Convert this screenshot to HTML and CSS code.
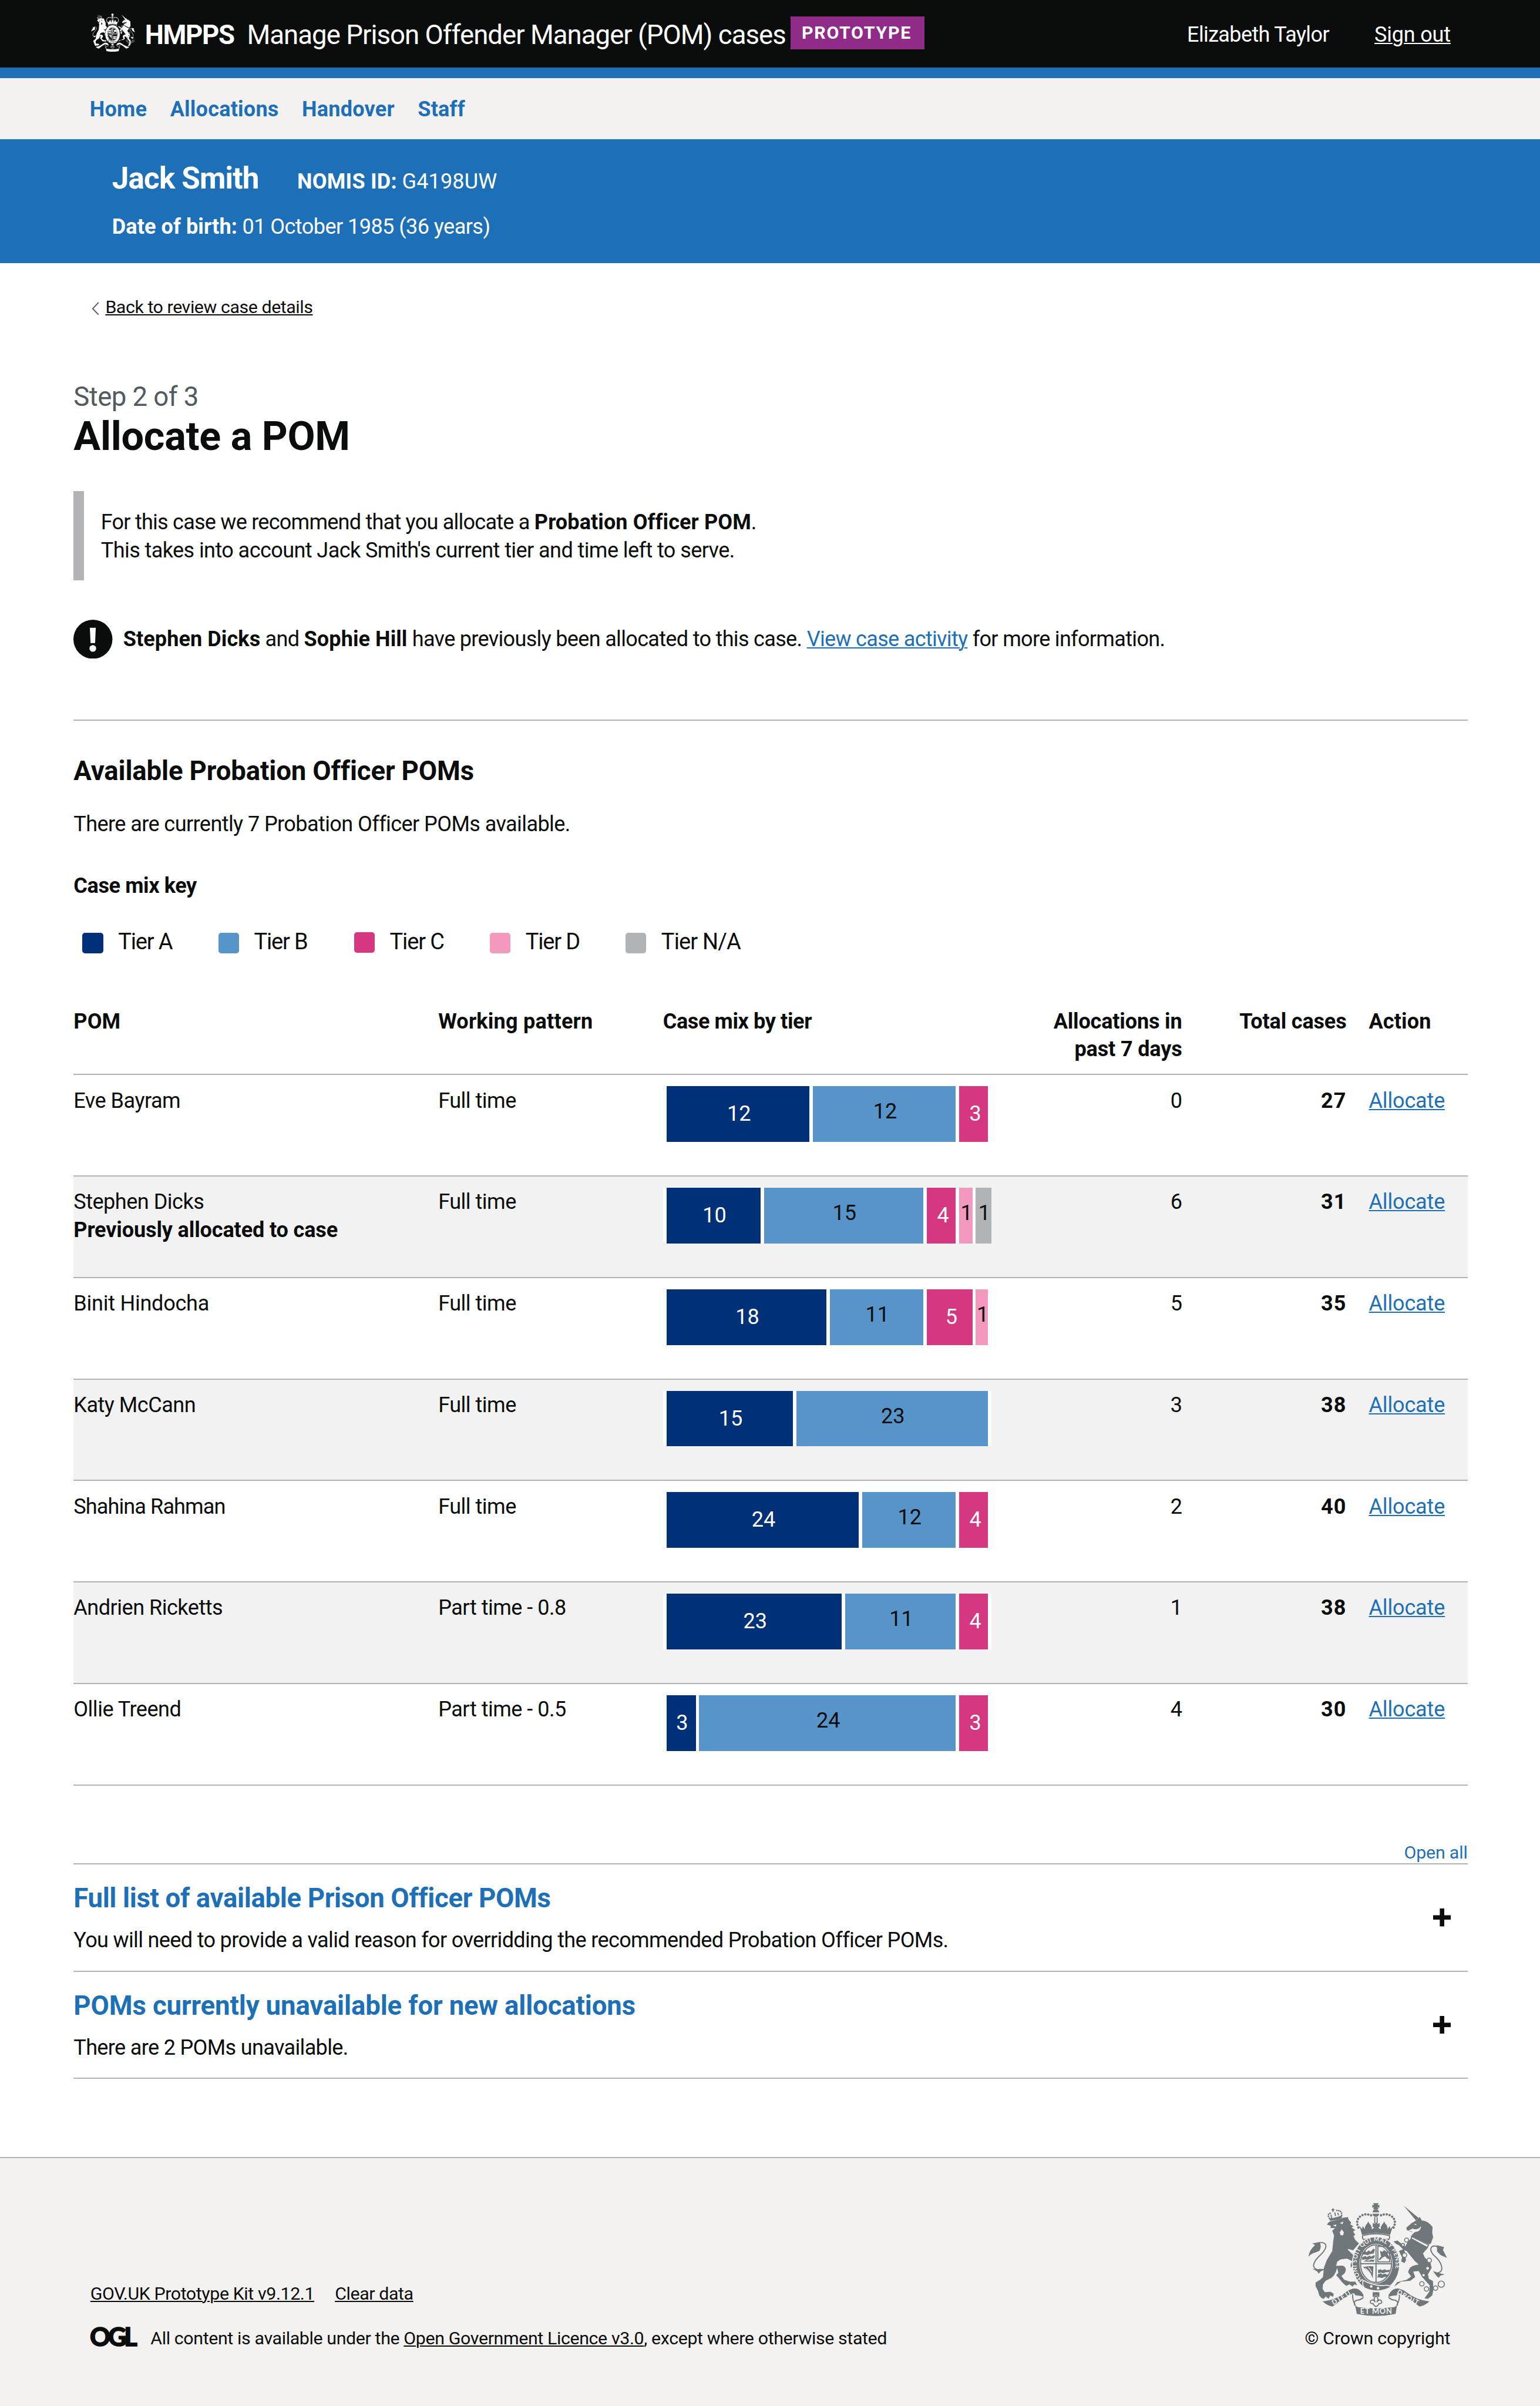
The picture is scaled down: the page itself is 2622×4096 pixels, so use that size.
FILE: index.html
```
<!DOCTYPE html>
<html lang="en">
<head>
<meta charset="utf-8">
<title>Allocate a POM</title>
<link rel="stylesheet" href="styles.css">
</head>
<body>
<svg class="defs" aria-hidden="true">
  <symbol id="crest" viewBox="106 88 754 616" preserveAspectRatio="none">
    <!-- centre crown -->
    <g class="ink">
      <path d="M458 90h30l-6 12 10-4v18l-10-4 6 12h-30l6-12-10 4v-18l10 4z"/>
      <path d="M455 140q3-16 18-16t18 16zM455 148h36q-2 16-18 16t-18-16z"/>
      <path d="M398 262 384 212l14 18 4-16 12 18q-2-14 4-18l4 8q-10-12 2-18l8-14 8 14q12 6 2 18l4-8q8 8 4 18l14-8-8-6v-20l14 6-2-8h14l-2 8 14-6v20l-8 6 14 8q-2-14 4-18l4 8q-10-12 2-18l8-14 8 14q12 6 2 18l4-8q6 6 4 18l12-18 4 16 14-18-16 50q-74-20-150 0z"/>
      <path d="M464 166h6v34h-6zM477 166h6v34h-6z"/>
    </g>
    <g class="dots">
      <path d="M379 222q-18-38 10-60 30-22 66-2"/>
      <path d="M569 222q18-38-10-60-30-22-66-2"/>
    </g>
    <path class="line" d="M402 266q72-20 144 0 4 12-4 22-68-18-136 0-8-10-4-22z"/>
    <!-- lion -->
    <g class="ink">
      <path d="m208 206 14-16 28-6 50-16 22-2 4 14 14 15-5 10 17 10-10 7 20 14-12 8 12 18-10 6 10 22 20 18-32 38-28-8 48 46 14 26-4 40-13-20-15 15-5-15-10 10v-20l10-15-30-15-35 5-18 13-6 22 34-2q30 12 12 42l-17 15 15 20 30 10 30 0 10 20-15-5-10 12-15-12-20 8-20-18-20-25-14-15 12-12-6-28q-12 42-32 55l-30 15-15 20-2 25 12 17 30-2 18 10-3 18-15-8-10 18-15-13-10 13-12-3-13-15-7-25-13-25v-20l25-15 15-15 5-50 15-40 30-50 5-50 5-35-10-25 15-15-25 0 3-11z"/>
      <path d="m168 300-38 8 14 10q-30 24-36 62 20-20 42-24l18-8q14-26 0-48z"/>
      <path d="m128 444 22 6 20-4 30 2-26 12-10 12-8-12z"/>
      <path d="m226 186-6-14q34-2 68-16l2 14q-30 14-64 16z"/>
    </g>
    <path class="line" d="M188 450q-50 8-52-24 4-24 32-50 40-38 34-60-8-16-34-12"/>
    <g class="dots small"><path d="M222 172q-18-24 14-30M288 156q4-30-36-26"/></g>
    <path class="line" d="M241 118v20m-8-12h16m-18 26 2 18m34-28 4 14m-20-16 4 20"/>
    <path class="gap" d="m240 210 20-4-4 12zm38-12 20-8-6 14zM288 232l12 16-4 16h-14l-4-16z"/>
    <path class="cut" d="m322 340 36 36"/>
    <!-- unicorn -->
    <g class="ink">
      <path d="m624 104 80 66-14 14z"/>
      <path d="m690 184 20-20 12 20q32 0 58 36l-2 30 5 25-13 35-12 2-90-42v-8l22-22-10-5-12 12-27-10-3-14 27-24z"/>
      <path d="m664 280 92 50-28 32 10 23 30 27 7 28-20 35 5 25 22 12 2 48-6 30-23 18-19-2 26-36 2-35-39-43-20-34-30 2 11 30-26 20-50 5-38 27 16-24 52-13 24-17-16-23q4-35 42-40l15-3-20-17-45-55-12-5 8 55-8 15-18-10 5-20-17-35 22-10-22-22-13-6-17-14 22-6 20 16 22 17 13-25z"/>
      <path d="m804 318 38 10-6 16 22 42-34-14-20-20z"/>
      <path d="m782 458 30 10 34 8-22 6-12 12-14-14z"/>
    </g>
    <path class="line" d="M796 470q42-4 32-40-8-30-42-58-24-28-12-44 18-14 40 4"/>
    <path class="gap" d="m676 206 14-4 4 6zM648 240l24-12q28 12 46-14-2 34-36 32z"/>
    <path class="line" d="m666 270 92 46-10 18-84-50z"/>
    <g class="gap ring"><circle cx="639" cy="290" r="11"/><circle cx="620" cy="316" r="8"/><circle cx="628" cy="372" r="12"/><circle cx="762" cy="400" r="12"/><circle cx="753" cy="443" r="10"/><circle cx="731" cy="480" r="9"/><circle cx="722" cy="527" r="12"/><circle cx="747" cy="555" r="12"/><circle cx="796" cy="550" r="12"/><circle cx="827" cy="529" r="17"/></g>
    <!-- garter and shield -->
    <ellipse class="ink edge" cx="474" cy="420" rx="128" ry="148"/>
    <ellipse class="gap" cx="474" cy="418" rx="90" ry="108"/>
    <ellipse class="line" cx="474" cy="418" rx="84" ry="102"/>
    <path class="line" d="M474 316v204M390 418h168"/>
    <g class="ink">
      <path d="m400 356 16-8 6 8 14-10 8 8 16-18 8 6-6 20-22 4-12 6-14-4-14 2zM398 384l18-8 8 6 14-8 10 6 14-8 6 4-8 14-18 2-12 6-14-4-16 4zM406 406l14-8 14 4 14-6 18 2-4 10z"/>
      <path d="m484 452 16-4 6 6 14-6 12 6 18-4-6 14-18 0-12 6-14-4-14 4zM484 476l16-6 8 6 14-4 12 6 8-4-6 14-18 2-12 6-12-4-12 2z"/>
      <path d="m496 348 12 6 10-10 14 10 12-4-8 14 8 14 4 16-14-4-10-12-14 6-16 16-6-6 14-16-4-14z"/>
      <path d="M404 436q32-6 56-4l-4 66q-6-24-24-38-14-12-28-24z"/>
    </g>
    <path class="cut" d="M416 442q20 16 30 34m-14-38q12 10 18 26"/>
    <path class="line" d="M484 324h64v84h-64z"/>
    <path class="ink edge" d="M404 508q66 36 130 26l24 8q-70 44-148 6-12-18-6-40z"/>
    <g class="gap"><circle cx="448" cy="541" r="7"/><circle cx="485" cy="551" r="7"/></g>
    <!-- ribbon -->
    <g class="ink">
      <path d="M185 622q72-6 128-52 50-34 80-2 14 14 14 30-22-10-44-8-8-14-12-12-50 22-112 72-30-6-54-28z"/>
      <path d="M763 622q-72-6-128-52-50-34-80-2-14 14-14 30 22-10 44-8 8-14 12-12 50 22 112 72 30-6 54-28z"/>
      <path d="M360 640q10 16 28 14 86 12 172 0 18 2 28-14l-8 50q-106 22-210 0z"/>
      <path d="M456 572h36v26h-8q-2-10-10-12-8 2-10 12h-8z"/>
    </g>
    <path class="line" d="M406 600q-14 14-36 16-20 6-10 30M348 584q-4 26 14 60M542 600q14 14 36 16 20 6 10 30M600 584q4 26-14 60M474 590q-18 18-4 36-14-20-26-6-4 16 14 14 6 14 16 16 10-2 16-16 18 2 14-14-12-14-26 6 14-18-4-36z"/>
  </symbol>
</svg>

<header class="header">
  <svg class="header-crest"><use href="#crest"/></svg>
  <span class="org">HMPPS</span>
  <span class="service">Manage Prison Offender Manager (POM) cases</span>
  <strong class="tag">PROTOTYPE</strong>
  <span class="user">Elizabeth Taylor</span>
  <a class="signout" href="#">Sign out</a>
</header>
<nav class="nav">
  <a class="home" href="#">Home</a><a href="#">Allocations</a><a href="#">Handover</a><a href="#">Staff</a>
</nav>
<section class="banner">
  <div class="banner-row">
    <h2 class="person">Jack Smith</h2>
    <div class="pair"><b>NOMIS ID:</b><span class="id">G4198UW</span></div>
  </div>
  <div class="pair dob"><b>Date of birth:</b><span>01 October 1985 (36 years)</span></div>
</section>

<main class="main">
  <div class="back">
    <svg class="chevron" viewBox="0 0 14 24"><path d="M12.5 1 2 12l10.5 11"/></svg>
    <a href="#">Back to review case details</a>
  </div>
  <div class="step">Step 2 of 3</div>
  <h1 class="title">Allocate a POM</h1>
  <div class="inset">
    <div class="inset-1">For this case we recommend that you allocate a <b>Probation Officer POM</b>.</div>
    <div class="inset-2">This takes into account Jack Smith's current tier and time left to serve.</div>
  </div>
  <div class="warning">
    <svg class="warning-icon" viewBox="0 0 70 70"><circle cx="35" cy="35" r="35"/><path d="M29.5 14.5h10.6l-1.2 27.5h-8.2z"/><circle class="dot" cx="34.8" cy="51.5" r="6"/></svg>
    <div class="warning-text"><b>Stephen Dicks</b> and <b>Sophie Hill</b> have previously been allocated to this case. <a class="link" href="#">View case activity</a> for more information.</div>
  </div>
  <hr class="rule">
  <h2 class="heading">Available Probation Officer POMs</h2>
  <p class="intro">There are currently 7 Probation Officer POMs available.</p>
  <h3 class="key-title">Case mix key</h3>
  <ul class="key">
    <li><i class="a"></i>Tier A</li><li><i class="b"></i>Tier B</li><li><i class="c"></i>Tier C</li><li><i class="d"></i>Tier D</li><li class="last"><i class="n"></i>Tier N/A</li>
  </ul>

  <div class="table" role="table">
    <div class="row head" role="row"><div>POM</div><div class="pattern">Working pattern</div><div class="mix-head">Case mix by tier</div><div class="num">Allocations in<br>past 7 days</div><div class="num">Total cases</div><div class="act">Action</div></div>
    <div class="row" role="row"><div>Eve Bayram</div><div>Full time</div><div class="bars"><span class="a" style="width:25.6rem">12</span><span class="b" style="width:25.6rem">12</span><span class="c" style="width:5.2rem">3</span></div><div class="num">0</div><div class="num total">27</div><div class="act"><a class="link" href="#">Allocate</a></div></div>
    <div class="row shade" role="row"><div>Stephen Dicks<br><b class="previous">Previously allocated to case</b></div><div>Full time</div><div class="bars"><span class="a" style="width:16.8rem">10</span><span class="b" style="width:28.6rem">15</span><span class="c" style="width:5.2rem">4</span><span class="d" style="width:2.4rem">1</span><span class="n" style="width:2.8rem">1</span></div><div class="num">6</div><div class="num total">31</div><div class="act"><a class="link" href="#">Allocate</a></div></div>
    <div class="row" role="row"><div class="loose">Binit Hindocha</div><div>Full time</div><div class="bars"><span class="a" style="width:28.6rem">18</span><span class="b" style="width:16.8rem">11</span><span class="c" style="width:8.2rem">5</span><span class="d" style="width:2.2rem">1</span></div><div class="num">5</div><div class="num total">35</div><div class="act"><a class="link" href="#">Allocate</a></div></div>
    <div class="row shade" role="row"><div>Katy McCann</div><div>Full time</div><div class="bars"><span class="a" style="width:22.6rem">15</span><span class="b" style="width:34.4rem">23</span></div><div class="num">3</div><div class="num total">38</div><div class="act"><a class="link" href="#">Allocate</a></div></div>
    <div class="row" role="row"><div class="tight">Shahina Rahman</div><div>Full time</div><div class="bars"><span class="a" style="width:34.4rem">24</span><span class="b" style="width:16.8rem">12</span><span class="c" style="width:5.2rem">4</span></div><div class="num">2</div><div class="num total">40</div><div class="act"><a class="link" href="#">Allocate</a></div></div>
    <div class="row shade" role="row"><div>Andrien Ricketts</div><div>Part time - 0.8</div><div class="bars"><span class="a" style="width:31.4rem">23</span><span class="b" style="width:19.8rem">11</span><span class="c" style="width:5.2rem">4</span></div><div class="num">1</div><div class="num total">38</div><div class="act"><a class="link" href="#">Allocate</a></div></div>
    <div class="row" role="row"><div>Ollie Treend</div><div>Part time - 0.5</div><div class="bars"><span class="a" style="width:5.2rem">3</span><span class="b" style="width:46rem">24</span><span class="c" style="width:5.2rem">3</span></div><div class="num">4</div><div class="num total">30</div><div class="act"><a class="link" href="#">Allocate</a></div></div>
  </div>

  <div class="open-all">Open all</div>
  <section class="fold">
    <div><h2>Full list of available Prison Officer POMs</h2><p>You will need to provide a valid reason for overridding the recommended Probation Officer POMs.</p></div>
    <svg class="plus" viewBox="0 0 32 32"><path d="M12 0h8v12h12v8H20v12h-8V20H0v-8h12z"/></svg>
  </section>
  <section class="fold last">
    <div><h2>POMs currently unavailable for new allocations</h2><p>There are 2 POMs unavailable.</p></div>
    <svg class="plus" viewBox="0 0 32 32"><path d="M12 0h8v12h12v8H20v12h-8V20H0v-8h12z"/></svg>
  </section>
</main>

<footer class="footer">
  <div class="footer-left">
    <div class="footer-links"><a href="#">GOV.UK Prototype Kit v9.12.1</a><a href="#">Clear data</a></div>
    <div class="licence">
      <svg class="ogl" viewBox="0 0 82 34"><text x="-1" y="33" textLength="84" lengthAdjust="spacing">OGL</text></svg>
      <div>All content is available under the <a href="#">Open Government Licence v3.0</a>, except where otherwise stated</div>
    </div>
  </div>
  <div class="footer-right">
    <svg class="footer-crest" viewBox="106 88 754 616" preserveAspectRatio="none">
      <use href="#crest" x="106" y="88" width="754" height="616"/>
      <path id="garter-path" fill="none" d="M408 506C382 490 369 460 369 420 369 350 416 296 474 296s106 54 106 124c0 48-22 86-56 112"/>
      <path id="dieu-path" fill="none" d="M244 642q50-28 104-62"/>
      <path id="droit-path" fill="none" d="M584 578q60 38 122 68"/>
      <text class="motto"><textPath href="#garter-path" startOffset="4" textLength="480">HONI SOIT QUI MAL Y PENSE</textPath></text>
      <text class="motto scroll"><textPath href="#dieu-path" textLength="112">DIEU</textPath></text>
      <text class="motto scroll"><textPath href="#droit-path" textLength="130">DROIT</textPath></text>
      <text class="motto wide" x="388" y="690" textLength="172">ET MON</text>
    </svg>
    <div class="copyright">© Crown copyright</div>
  </div>
</footer>
</body>
</html>
```
FILE: styles.css
```
/* 1rem = 5 CSS points of the original 1381pt-wide layout */
html { font-size: 9.4931px; }
* { box-sizing: border-box; }
body {
  margin: 0;
  height: 4096px;
  display: flex;
  flex-direction: column;
  background: #fff;
  color: #0b0c0c;
  font-family: Roboto, "Liberation Sans", sans-serif;
  font-size: 3.8rem;
  line-height: 5rem;
  letter-spacing: -0.0165em;
  white-space: nowrap;
}
h1, h2, h3, p, ul { margin: 0; padding: 0; }
b, h1, h2, h3, .head, .total { font-weight: 700; letter-spacing: 0.002em; }
svg { display: block; }
.defs { position: absolute; width: 0; height: 0; }
a {
  color: inherit;
  text-decoration: underline;
  text-decoration-thickness: 2px;
  text-underline-offset: 0.2rem;
}
.link { color: #1d70b8; }

/* crest */
.ink { fill: var(--crest); }
.gap { fill: var(--crest-gap); }
.edge { stroke: var(--crest-gap); stroke-width: 5; }
.cut { fill: none; stroke: var(--crest-gap); stroke-width: 4; }
.line { fill: none; stroke: var(--crest); stroke-width: 6; }
.ring { stroke: var(--crest); stroke-width: 5; }
.dots { fill: none; stroke: var(--crest); stroke-width: 13; stroke-linecap: round; stroke-dasharray: 0 16; }
.dots.small { stroke-width: 9; stroke-dasharray: 0 11; }
.motto { fill: var(--crest-gap); font: 700 32px Lato, sans-serif; letter-spacing: 0; }
.scroll { font-size: 36px; }
.wide { font-size: 41px; }

/* header */
.header {
  --crest: #fff;
  --crest-gap: #0b0c0c;
  height: 14rem;
  padding-left: 16.3rem;
  display: grid;
  grid-template-columns: 9.7rem 18.3rem 97.5rem 71.1rem 33.6rem auto;
  align-items: start;
  background: #0b0c0c;
  border-bottom: 2rem solid #1d70b8;
  color: #fff;
}
.header-crest { width: 7.9rem; height: 6.9rem; margin-top: 2.4rem; }
.org { margin-top: 3.35rem; font-size: 4.8rem; line-height: 6rem; font-weight: 700; letter-spacing: -0.03em; }
.service { margin-top: 3.35rem; font-size: 4.8rem; line-height: 6rem; letter-spacing: -0.0215em; }
.tag {
  justify-self: start;
  width: 24rem;
  margin-top: 3rem;
  padding-left: 2rem;
  background: #912b88;
  font-size: 3.2rem;
  line-height: 5.8rem;
  letter-spacing: 0.055em;
}
.user { margin-top: 3.75rem; letter-spacing: -0.018em; }
.signout { margin-top: 3.75rem; letter-spacing: -0.006em; justify-self: start; }

/* navigation */
.nav {
  height: 11rem;
  padding: 3.15rem 0 0 16.1rem;
  display: flex;
  gap: 4.15rem;
  background: #f3f2f1;
}
.nav a { color: #1d70b8; font-weight: 700; text-decoration: none; letter-spacing: 0.006em; }

/* person banner */
.banner { height: 22.2rem; padding: 4.1rem 0 0 20.1rem; background: #1d70b8; color: #fff; }
.banner-row { display: flex; align-items: baseline; height: 6rem; }
.person { width: 33.2rem; font-size: 5.4rem; line-height: 6rem; letter-spacing: -0.017em; }
.pair { display: flex; gap: 0.9rem; }
.pair b { letter-spacing: 0.007em; }
.pair .id { letter-spacing: 0.003em; }
.dob { margin-top: 3.15rem; letter-spacing: -0.0155em; }
.dob b { letter-spacing: 0.002em; }

/* main */
.main { margin: 0 13rem 0 13.2rem; flex: none; }
.back {
  margin-top: 5.9rem;
  padding-left: 3.2rem;
  display: flex;
  gap: 1.1rem;
  font-size: 3.2rem;
  line-height: 4rem;
  letter-spacing: -0.0145em;
}
.chevron { width: 1.4rem; height: 2.4rem; margin-top: 1rem; }
.chevron path { fill: none; stroke: #505a5f; stroke-width: 2; }
.step { margin-top: 11.2rem; font-size: 4.8rem; line-height: 6rem; letter-spacing: -0.012em; color: #505a5f; }
.title { margin-top: 0.2rem; font-size: 7.2rem; line-height: 7.6rem; letter-spacing: -0.004em; }
.inset { height: 16rem; margin-top: 6rem; padding: 3.15rem 0 0 3rem; border-left: 2rem solid #b1b4b6; }
.inset-1 { letter-spacing: -0.0215em; }
.warning { height: 7rem; margin-top: 7rem; display: flex; align-items: center; gap: 1.9rem; letter-spacing: -0.0192em; }
.warning-text { padding-top: 0.25rem; }
.warning-icon { width: 7rem; height: 7rem; fill: #0b0c0c; }
.warning-icon path, .warning-icon .dot { fill: #fff; }
.rule { margin: 11rem 0 0; border: 0; border-top: 2px solid #b1b4b6; }
.heading { margin-top: 6.1rem; font-size: 4.8rem; line-height: 6rem; letter-spacing: -0.003em; }
.intro { margin-top: 4rem; letter-spacing: -0.0165em; }
.key-title { margin-top: 6rem; font-size: inherit; letter-spacing: -0.011em; }
.key { display: flex; margin-top: 5rem; padding-left: 1.6rem; list-style: none; font-size: 4rem; letter-spacing: -0.03em; }
.key li { width: 24.35rem; display: flex; gap: 2.7rem; }
.key .last { letter-spacing: -0.022em; }
.key i { width: 3.7rem; height: 3.7rem; margin-top: 0.9rem; border-radius: 0.5rem; }
.key i.c { margin-top: 0.8rem; }
.a { background: #003078; color: #fff; }
.b { background: #5694ca; }
.c { background: #d53880; color: #fff; }
.d { background: #f499be; }
.n { background: #b1b4b6; }

/* table */
.table { margin-top: 7.2rem; }
.row {
  height: 18.2rem;
  padding-top: 2.15rem;
  display: grid;
  grid-template-columns: 65.4rem 40.3rem 64rem 29.1rem 29.5rem 21.7rem;
  align-items: start;
  border-bottom: 2px solid #b1b4b6;
  letter-spacing: -0.014em;
}
.row.head { height: 14.2rem; letter-spacing: 0.003em; }
.head .pattern { letter-spacing: 0.006em; }
.mix-head { letter-spacing: -0.011em; }
.head .num { letter-spacing: -0.005em; }
.shade { background: #f2f2f2; }
.previous { letter-spacing: -0.004em; }
.loose { letter-spacing: -0.007em; }
.tight { letter-spacing: -0.025em; }
.num { text-align: right; }
.num.total { letter-spacing: 0.03em; }
.act { padding-left: 4rem; }
.act .link { letter-spacing: -0.005em; }
.bars { width: 58.9rem; height: 10rem; margin-top: -0.15rem; padding-left: 0.7rem; display: flex; gap: 0.6rem; background: #fff; letter-spacing: 0; }
.bars span { flex: none; padding-left: 0.3rem; display: flex; justify-content: center; line-height: 9.1rem; }
.bars .a, .bars .c { line-height: 10rem; }
.bars .c { padding-left: 0.7rem; }

/* accordion */
.open-all { margin-top: 10rem; text-align: right; font-size: 3.2rem; line-height: 4rem; letter-spacing: -0.006em; color: #1d70b8; }
.fold {
  height: 19.2rem;
  padding: 3.15rem 3rem 0 0;
  display: flex;
  justify-content: space-between;
  border-top: 2px solid #b1b4b6;
}
.fold.last { height: 19.4rem; border-bottom: 2px solid #b1b4b6; }
.fold h2 { font-size: 4.8rem; line-height: 6rem; letter-spacing: -0.0075em; color: #1d70b8; }
.fold.last h2 { letter-spacing: -0.003em; }
.fold p { margin-top: 2rem; letter-spacing: -0.0185em; }
.plus { width: 3.2rem; height: 3.2rem; margin-top: 4.75rem; fill: #0b0c0c; }

/* footer */
.footer {
  --crest: #6f777b;
  --crest-gap: #f3f2f1;
  flex: 1;
  margin-top: 14rem;
  padding: 8rem 16.1rem 0 16.2rem;
  display: flex;
  justify-content: space-between;
  align-items: flex-start;
  background: #f3f2f1;
  border-top: 2px solid #b1b4b6;
  font-size: 3.2rem;
  line-height: 4rem;
  letter-spacing: -0.0125em;
}
.footer-left { padding-top: 14.4rem; }
.footer-links { display: flex; gap: 3.7rem; letter-spacing: -0.0135em; }
.licence { margin-top: 4rem; display: flex; gap: 2.5rem; }
.ogl { width: 8.3rem; height: 3.5rem; overflow: visible; }
.ogl text { font: 900 45px Lato, sans-serif; fill: #0b0c0c; stroke: #0b0c0c; stroke-width: 1.5; letter-spacing: 0; }
.footer-right { display: flex; flex-direction: column; align-items: center; }
.footer-crest { width: 25rem; height: 20.4rem; }
.copyright { margin-top: 2rem; letter-spacing: -0.007em; }
```
